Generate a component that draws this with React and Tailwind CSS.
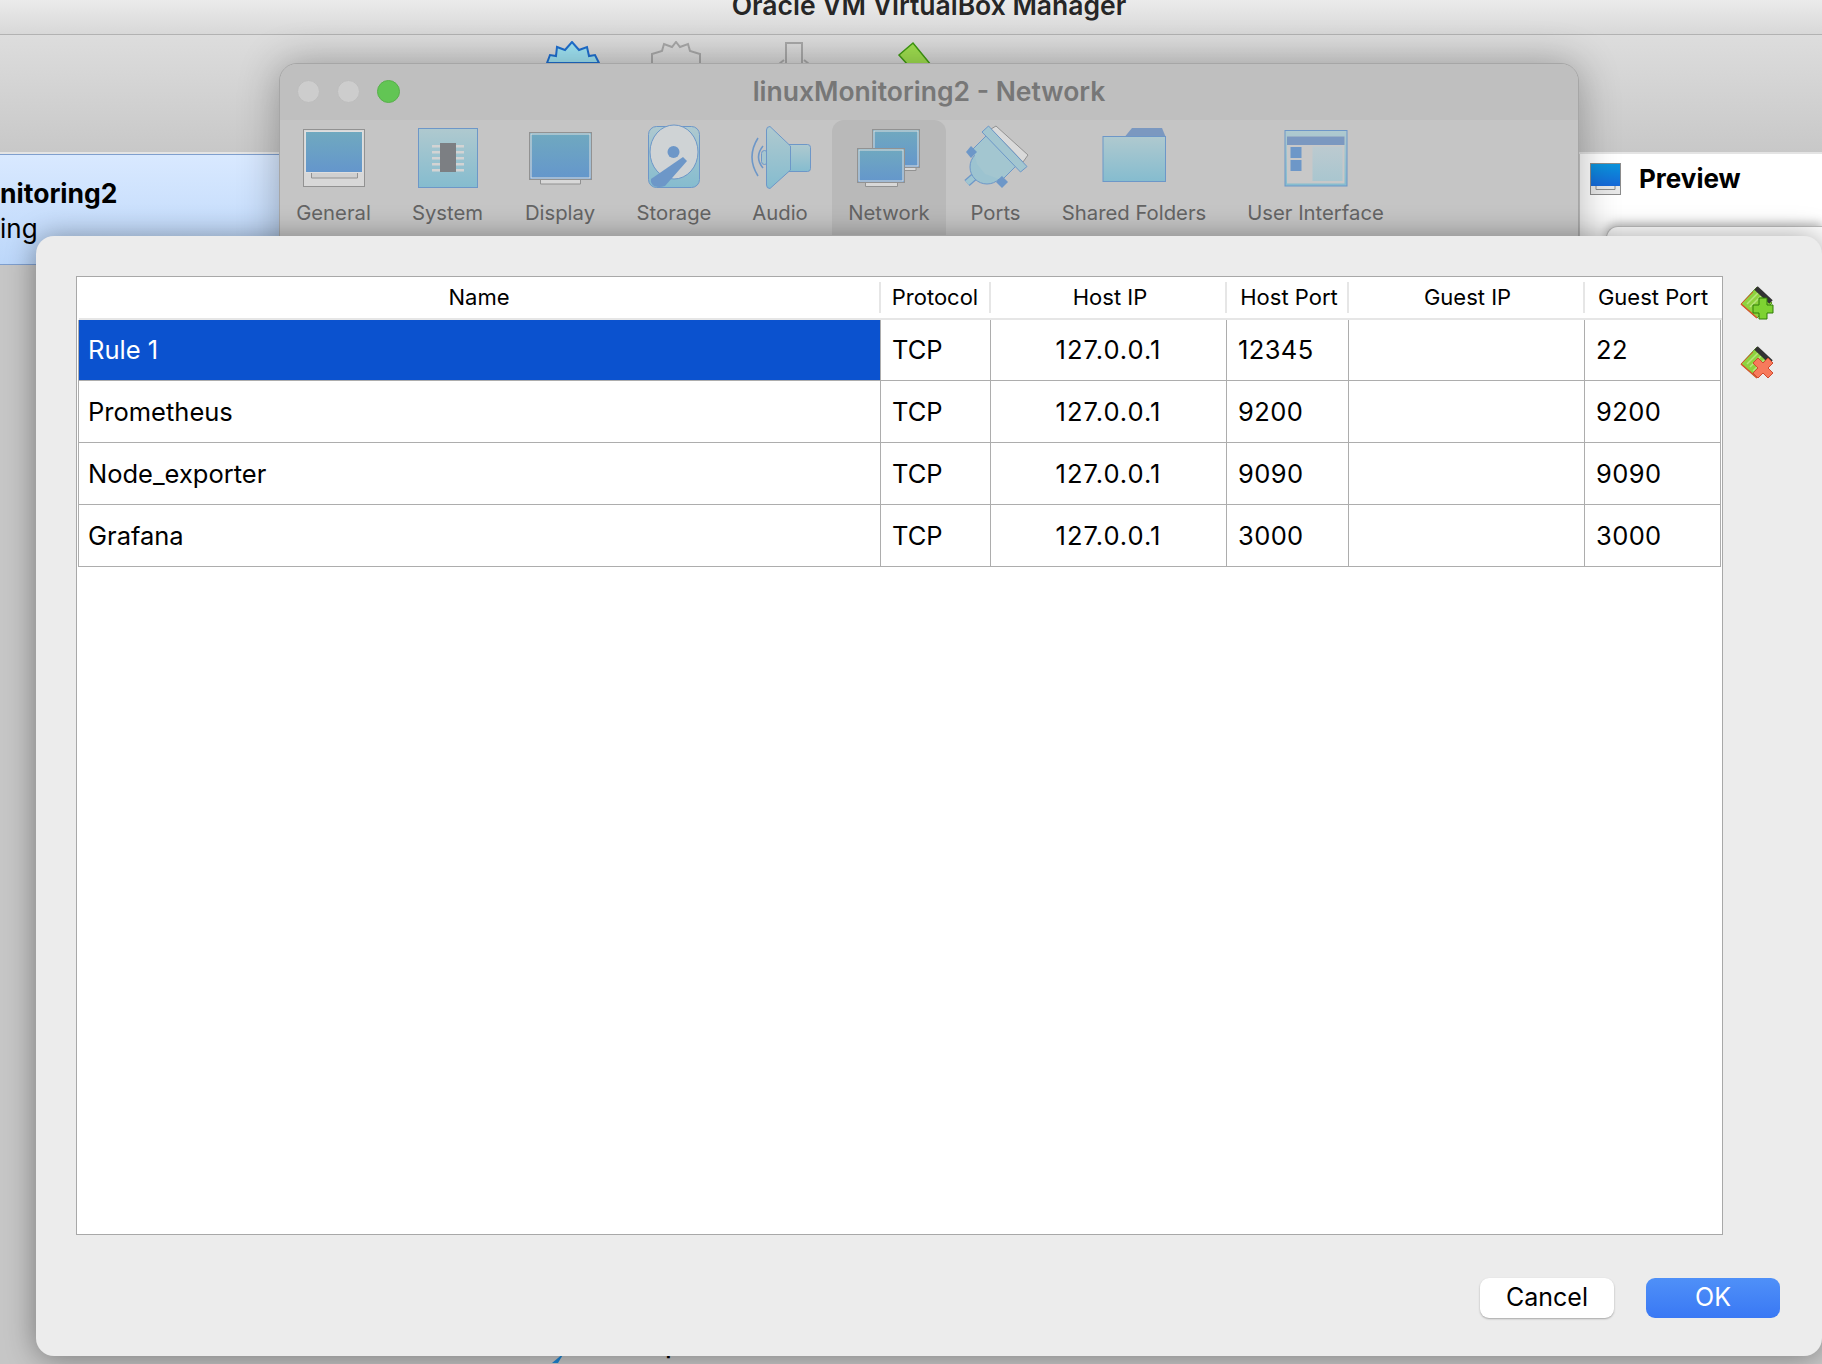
const rules = [
  { name: 'Rule 1', proto: 'TCP', hostIp: '127.0.0.1', hostPort: '12345', guestPort: '22' },
  { name: 'Prometheus', proto: 'TCP', hostIp: '127.0.0.1', hostPort: '9200', guestPort: '9200' },
  { name: 'Node_exporter', proto: 'TCP', hostIp: '127.0.0.1', hostPort: '9090', guestPort: '9090' },
  { name: 'Grafana', proto: 'TCP', hostIp: '127.0.0.1', hostPort: '3000', guestPort: '3000' },
];

const columns = 'grid grid-cols-[802px_110px_236px_122px_236px_136px]';

const headers = [
  { title: 'Name', extra: 'border-r-2' },
  { title: 'Protocol', extra: 'border-r-2' },
  { title: 'Host IP', extra: 'border-r-2 pl-[4px]' },
  { title: 'Host Port', extra: 'border-r-2 pl-[4px]' },
  { title: 'Guest IP', extra: 'border-r-2 pl-[3px]' },
  { title: 'Guest Port', extra: '' },
];

const Defs = () => (
  <svg width="0" height="0" className="absolute">
    <defs>
      <linearGradient id="screen" x1="0" y1="0" x2="0" y2="1">
        <stop offset="0" stopColor="#70a9bf" />
        <stop offset="1" stopColor="#6496cc" />
      </linearGradient>
      <linearGradient id="teal" x1="0" y1="0" x2="0" y2="1">
        <stop offset="0" stopColor="#afc9cf" />
        <stop offset="1" stopColor="#85bccf" />
      </linearGradient>
      <linearGradient id="panel" x1="0" y1="0" x2="0" y2="1">
        <stop offset="0" stopColor="#bccad0" />
        <stop offset="1" stopColor="#a9c6cf" />
      </linearGradient>
      <linearGradient id="preview" x1="0" y1="0" x2="0" y2="1">
        <stop offset="0" stopColor="#0a94dc" />
        <stop offset="1" stopColor="#1668d8" />
      </linearGradient>
    </defs>
  </svg>
);

const Icon = ({ children }) => (
  <svg width="70" height="66" viewBox="0 0 70 66" className="shrink-0">{children}</svg>
);

const GeneralIcon = () => (
  <Icon>
    <rect x="4.5" y="5.5" width="61" height="57" fill="#d8d8d8" stroke="#929292" />
    <rect x="6.5" y="7.5" width="57" height="41" fill="url(#screen)" stroke="#dedede" />
    <path d="M12.5 49v5h46v-5" fill="#d0d0d0" stroke="#929292" />
  </Icon>
);

const SystemIcon = () => (
  <Icon>
    <rect x="5.5" y="4.5" width="59" height="59" fill="url(#teal)" stroke="#6d97c8" />
    {[21, 27, 33, 39, 45].map((y) => (
      <rect key={y} x="19" y={y} width="32" height="2.5" fill="#d3d3d3" />
    ))}
    <rect x="27" y="19" width="16" height="29" fill="#7c7f83" />
  </Icon>
);

const DisplayIcon = () => (
  <Icon>
    <path d="M15.5 54v6h40v-6" fill="#d8d8d8" stroke="#929292" />
    <rect x="4.5" y="8.5" width="62" height="47" fill="url(#screen)" stroke="#929292" />
    <rect x="6" y="10" width="59" height="44" fill="none" stroke="#dedede" />
  </Icon>
);

const StorageIcon = () => (
  <Icon>
    <rect x="9.5" y="2.5" width="51" height="61" rx="8" fill="url(#teal)" stroke="#6d97c8" />
    <ellipse cx="35" cy="28" rx="24" ry="27" fill="#cfd3d5" stroke="#6d97c8" />
    <circle cx="34.5" cy="28" r="6" fill="#6d97c8" />
    <path d="M12 55 L44 33 L48 37 L26 62 Q20 64 15 62 Q11 59 12 55 Z" fill="#6d97c8" />
  </Icon>
);

const AudioIcon = () => (
  <Icon>
    <path d="M13 14 Q1 33 13 52" fill="none" stroke="#6d97c8" strokeWidth="1.6" />
    <path d="M18 22 Q9 33 18 44" fill="none" stroke="#6d97c8" strokeWidth="1.6" />
    <rect x="16.5" y="26.5" width="6" height="14" rx="3" fill="#a6c6cf" stroke="#6d97c8" />
    <rect x="40.5" y="20.5" width="25" height="27" rx="3" fill="url(#teal)" stroke="#6d97c8" />
    <path d="M21.5 6 Q21.5 2.5 25 2.5 L45.5 22 V46 L25 64.5 Q21.5 64.5 21.5 61 Z" fill="url(#teal)" stroke="#6d97c8" />
  </Icon>
);

const NetworkIcon = () => (
  <Icon>
    <path d="M50 43h12v3.500h-12z" fill="#d8d8d8" stroke="#929292" />
    <rect x="18.500" y="5.500" width="47" height="38" fill="url(#screen)" stroke="#929292" />
    <rect x="20" y="7" width="44" height="35" fill="none" stroke="#dedede" />
    <path d="M11.500 57v5.500h32V57" fill="#d8d8d8" stroke="#929292" />
    <rect x="3.500" y="24.500" width="47" height="34" fill="url(#screen)" stroke="#929292" />
    <rect x="5" y="26" width="44" height="31" fill="none" stroke="#dedede" />
  </Icon>
);

const PortsIcon = () => (
  <Icon>
    <path d="M6 59 L14 52" stroke="#6d97c8" strokeWidth="8" />
    <path d="M6 59 L14 52" stroke="#9fc5d1" strokeWidth="5.500" />
    <path d="M30 5 L35 2 L67 31 L62 38 Z" fill="#dadada" stroke="#929292" />
    <path d="M9.500 27.500 L26 11 L56 41 L39.500 57.500 Z" fill="#a3c6d0" stroke="#6d97c8" />
    <circle cx="26" cy="43" r="17" fill="#9cc3d0" stroke="#6d97c8" />
    <path d="M13 29 L27 14 L53 40 L38 55 L24 50 L16 40 Z" fill="#a3c6d0" />
    <path d="M5 28 L10 22 L16 28 L10 34 Z" fill="#6d97c8" />
    <path d="M35 58 L41 52 L47 58 L41 64 Z" fill="#6d97c8" />
    <path d="M21 8 L27.500 2 L66 42.500 L59.500 48 Z" fill="#a3c6d0" stroke="#6d97c8" />
  </Icon>
);

const FolderIcon = () => (
  <Icon>
    <path d="M26 12.500 L33 4 H63 L66.500 12.500 Z" fill="#7b98c0" />
    <rect x="4" y="12.500" width="62.500" height="45" fill="url(#teal)" stroke="#6d97c8" />
  </Icon>
);

const InterfaceIcon = () => (
  <Icon>
    <rect x="4" y="6.500" width="62" height="55.500" fill="url(#teal)" stroke="#6d97c8" />
    <rect x="6" y="12.500" width="57.500" height="47" fill="#c8c8c8" />
    <rect x="6" y="12.500" width="57.500" height="8.500" fill="#7b98c0" />
    <rect x="9.500" y="23" width="11" height="11" fill="#6d97c8" />
    <rect x="9.500" y="36" width="11" height="11" fill="#6d97c8" />
    <rect x="31.500" y="22.500" width="30" height="34.500" fill="url(#panel)" />
  </Icon>
);

const toolbarItems = [
  { label: 'General', width: 'w-[115px]', Glyph: GeneralIcon },
  { label: 'System', width: 'w-[113px]', Glyph: SystemIcon },
  { label: 'Display', width: 'w-[112px]', Glyph: DisplayIcon },
  { label: 'Storage', width: 'w-[116px]', Glyph: StorageIcon },
  { label: 'Audio', width: 'w-[96px]', Glyph: AudioIcon },
  { label: 'Network', width: 'w-[122px]', Glyph: NetworkIcon, active: true },
  { label: 'Ports', width: 'w-[91px]', Glyph: PortsIcon },
  { label: 'Shared Folders', width: 'w-[186px]', Glyph: FolderIcon },
  { label: 'User Interface', width: 'w-[177px]', Glyph: InterfaceIcon },
];

const RuleIcon = ({ remove }) => (
  <svg width="34" height="34" viewBox="0 0 34 34">
    <path d="M1 18 L17 1 L32 17 L17 32 Z" fill="#8ed23e" stroke="#5a9a1c" />
    <path d="M1 18 L17 32" stroke="#d8542c" strokeWidth="1.500" />
    <path d="M1 18 L13 6" stroke="#d8542c" strokeWidth="1" />
    <path d="M7 18 L18 7 M10 21 L21 10 M13 25 L24 14" stroke="#b6e47a" strokeWidth="1.500" />
    <path d="M16 2 L31 16" stroke="#333333" strokeWidth="5" />
    {remove ? (
      <path
        d="M18 12 L23 17 L28 12 L33 17 L28 22 L33 27 L28 32 L23 27 L18 32 L13 27 L18 22 L13 17 Z"
        fill="#f77a5c"
        stroke="#cf4a30"
      />
    ) : (
      <path
        d="M19 12 H27 V19 H33 V27 H27 V33 H19 V27 H13 V19 H19 Z"
        fill="#7ed232"
        stroke="#2e7d06"
      />
    )}
  </svg>
);

export default function App() {
  return (
    <div className="relative w-[1822px] h-[1364px] overflow-hidden [font-family:Inter,sans-serif] bg-[#d2d2d2] text-black">
      <Defs />

      {/* manager window in the back */}
      <div className="flex flex-col h-full">
        <div className="h-[35px] shrink-0 overflow-hidden border-b border-[#b2b2b2] bg-gradient-to-b from-[#ebebeb] to-[#d8d8d8] flex justify-center pl-[36px]">
          <span className="text-[26.5px] leading-[28px] font-semibold whitespace-nowrap text-[#262626] -mt-[9px]">Oracle VM VirtualBox Manager</span>
        </div>

        <div className="h-[119px] shrink-0 bg-gradient-to-b from-[#dddddd] to-[#c8c8c8] flex pl-[546px] gap-[50px] pt-[6px] border-b-2 border-[#e4e4e4]">
          <svg width="54" height="24" viewBox="0 0 54 24">
            <path d="M1 22 L4 14 L10 15 L11 6 L19 9 L26 1 L33 9 L41 6 L43 15 L49 14 L53 22 Z" fill="#a0e4f4" stroke="#1f6fd0" strokeWidth="2" />
          </svg>
          <svg width="52" height="24" viewBox="0 0 52 24">
            <path d="M2 23 L2 13 L12 10 L14 3 L22 6 L26 1 L30 6 L38 3 L40 10 L50 13 L50 23" fill="none" stroke="#a8a8a8" strokeWidth="2" />
          </svg>
          <svg width="40" height="24" viewBox="0 0 40 24" className="ml-[23px]">
            <path d="M11 23 V2 H27 V23 M4 23 L9 19 M34 23 L29 19" fill="none" stroke="#a8a8a8" strokeWidth="2" />
          </svg>
          <svg width="36" height="24" viewBox="0 0 36 24" className="ml-[31px]">
            <path d="M3 14 L17 2 L35 24 H12 Z" fill="#a0e050" stroke="#3f9a12" strokeWidth="1.500" />
          </svg>
        </div>

        <div className="flex flex-1 min-h-0">
          <div className="w-[530px] shrink-0 bg-[#c6c6c6]">
            <div className="h-[111px] w-[290px] border-t border-b border-[#7f9fce] bg-gradient-to-b from-[#d9e9ff] to-[#bcd7fa] pt-[21px] pl-0">
              <div className="text-[26.500px] leading-[35px] font-bold">nitoring2</div>
              <div className="text-[26px] leading-[35px]">ing</div>
            </div>
          </div>
          <div className="flex-1 min-w-0 flex flex-col bg-[#cbcbcb]">
            <div className="ml-[1050px] h-[100px] bg-white shrink-0 overflow-hidden">
              <div className="h-[72px] flex items-start gap-[18px] pt-[9px] pl-[10px]">
                <svg width="31" height="32" viewBox="0 0 31 32" className="shrink-0">
                  <rect x="0.500" y="0.500" width="30" height="31" fill="#e8e8e8" stroke="#8c8c8c" />
                  <rect x="1" y="1" width="29" height="22" fill="url(#preview)" />
                  <path d="M6 23v3.500h19V23" fill="none" stroke="#8c8c8c" />
                </svg>
                <span className="text-[26px] leading-[32px] font-bold">Preview</span>
              </div>
              <div className="ml-[26px] h-[40px] rounded-tl-[12px] border-t border-l border-[#bcbcbc] bg-white shadow-[0_-3px_8px_rgba(0,0,0,0.25)]" />
            </div>
            <div className="mt-auto flex items-end gap-[10px] pl-[20px] h-[28px] overflow-hidden">
              <svg width="16" height="28" viewBox="0 0 16 28" className="shrink-0">
                <path d="M2 27 L14 17 L8 27 Z" fill="#1f88d8" />
              </svg>
              <span className="text-[22px] leading-[28px] font-semibold mb-[4px] ml-[21px]">Description</span>
            </div>
          </div>
        </div>
      </div>

      {/* settings window */}
      <div className="absolute left-[279px] top-[63px] w-[1300px] h-[240px] rounded-t-[18px] border border-[#a6a6a6] bg-[#c5c5c5] shadow-[0_0_40px_rgba(0,0,0,0.3)] flex flex-col overflow-hidden">
        <div className="h-[56px] shrink-0 bg-[#bfbfbf] relative flex items-center justify-center">
          <div className="absolute left-[17px] top-[16px] flex gap-[17px]">
            <span className="w-[23px] h-[23px] rounded-full bg-[#cdcdcd] border border-[#bcbcbc]" />
            <span className="w-[23px] h-[23px] rounded-full bg-[#cdcdcd] border border-[#bcbcbc]" />
            <span className="w-[23px] h-[23px] rounded-full bg-[#62c554] border border-[#58b04b]" />
          </div>
          <span className="text-[26.5px] font-semibold text-[#777777]">linuxMonitoring2 - Network</span>
        </div>
        <div className="flex-1 flex -ml-[4px]">
          {toolbarItems.map(({ label, width, Glyph, active }) => (
            <div key={label} className={`${width} shrink-0 ${active ? 'px-[4px]' : ''}`}>
              <div className={`h-[115px] flex flex-col items-center pt-[4px] ${active ? 'bg-[#b9b9b9] rounded-t-[12px]' : ''}`}>
                <Glyph />
                <span className="mt-[10px] text-[20.3px] leading-[26px] whitespace-nowrap text-[#646464]">{label}</span>
              </div>
            </div>
          ))}
        </div>
      </div>

      {/* port forwarding sheet */}
      <div className="absolute left-[36px] top-[236px] w-[1786px] h-[1120px] rounded-[18px] bg-[#ececec] shadow-[0_2px_30px_rgba(0,0,0,0.4)] pl-[40px] pt-[40px] flex flex-col">
        <div className="flex">
          <div className="w-[1647px] h-[959px] border border-[#a8a8a8] bg-white pl-px shrink-0">
            <div className={`${columns} ml-px h-[43px] border-b-2 border-[#e6e6e6] text-[22px] leading-[24px]`}>
              {headers.map(({ title, extra }) => (
                <div
                  key={title}
                  className={`my-[5px] pb-[2px] flex items-center justify-center whitespace-nowrap border-[#e6e6e6] ${extra}`}
                >
                  {title}
                </div>
              ))}
            </div>
            {rules.map((rule, i) => (
              <div
                key={rule.name}
                className={`${columns} ${i === 0 ? 'h-[61px]' : 'h-[62px]'} border-b border-l border-[#adadad] text-[25.5px] w-[1643px]`}
              >
                <div className={`flex items-center pl-[9px] pt-[1px] border-r border-[#adadad] ${i === 0 ? 'bg-[#0b52cf] text-white' : ''}`}>{rule.name}</div>
                <div className="flex items-center pl-[11px] pt-[1px] border-r border-[#adadad]">{rule.proto}</div>
                <div className="flex items-center justify-center pt-[1px] tracking-[1px] border-r border-[#adadad]">{rule.hostIp}</div>
                <div className="flex items-center pl-[11px] pt-[1px] tracking-[0.4px] border-r border-[#adadad]">{rule.hostPort}</div>
                <div className="border-r border-[#adadad]" />
                <div className="flex items-center pl-[11px] pt-[1px] tracking-[0.4px] border-r border-[#adadad]">{rule.guestPort}</div>
              </div>
            ))}
          </div>
          <div className="ml-[17px] pt-[10px] flex flex-col gap-[26px]">
            <RuleIcon />
            <RuleIcon remove />
          </div>
        </div>
        <div className="mt-[43px] pr-[42px] flex justify-end gap-[32px]">
          <button className="w-[134px] h-[40px] rounded-[9px] bg-white text-[25px] shadow-[0_1px_2px_rgba(0,0,0,0.3)]">Cancel</button>
          <button className="w-[134px] h-[40px] rounded-[9px] bg-gradient-to-b from-[#4f90f8] to-[#3a78f4] text-white text-[25px]">OK</button>
        </div>
      </div>
    </div>
  );
}
